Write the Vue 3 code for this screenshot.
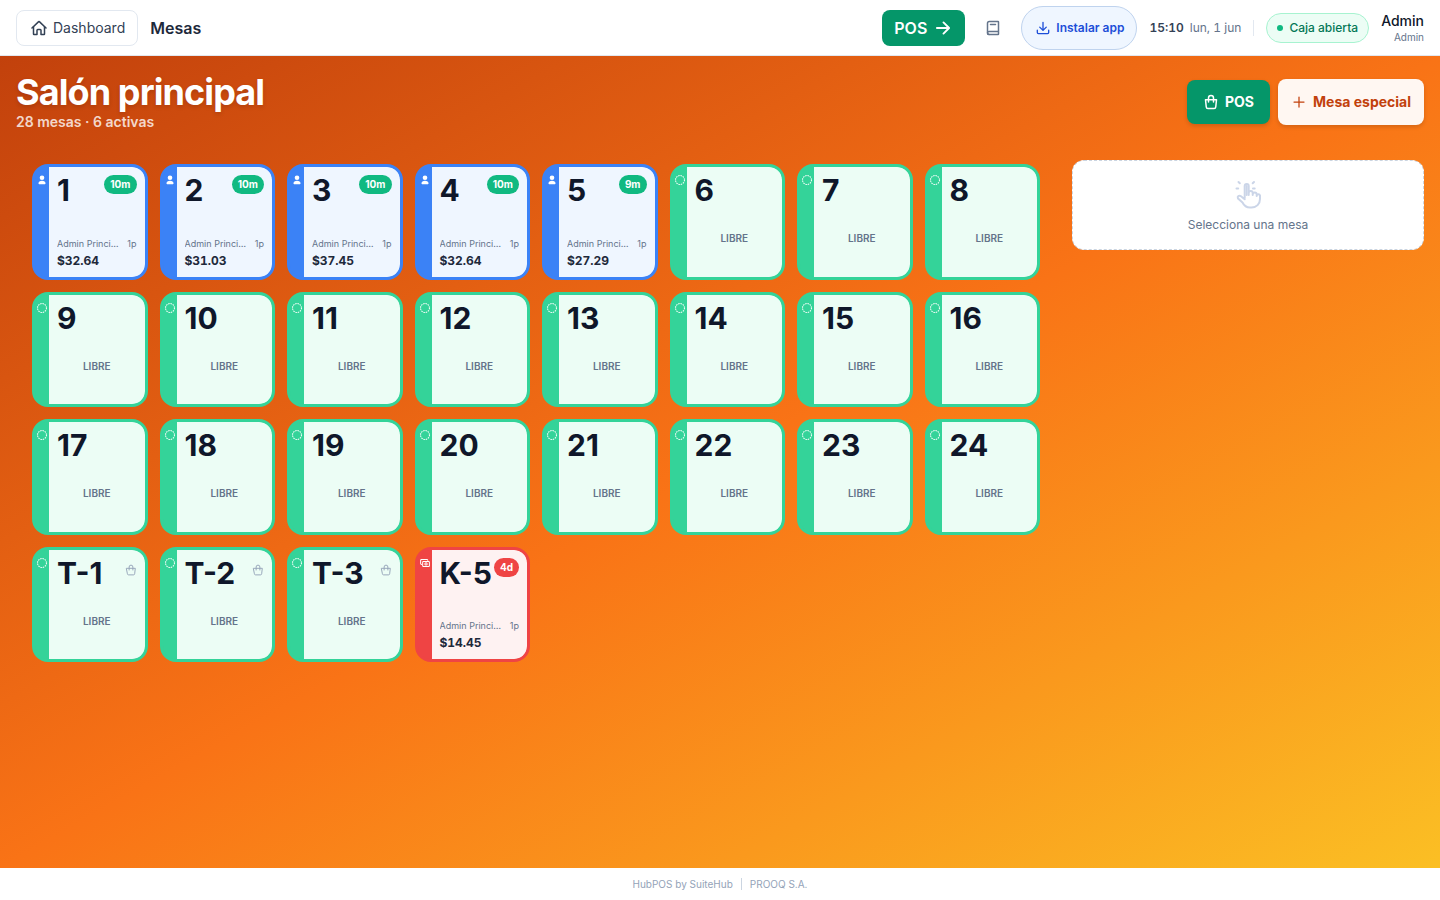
<script setup>
import {computed, ref} from "vue";

const busy = [
  {name: '1', time: '10m', total: '$32.64'},
  {name: '2', time: '10m', total: '$31.03'},
  {name: '3', time: '10m', total: '$37.45'},
  {name: '4', time: '10m', total: '$32.64'},
  {name: '5', time: '9m', total: '$27.29'},
].map((table) => ({...table, status: 'busy', waiter: 'Admin Principal', guests: 1}));

const free = Array.from({length: 19}, (_, i) => ({name: `${i + 6}`, status: 'free'}));

const takeaway = ['T-1', 'T-2', 'T-3'].map((name) => ({name, status: 'free', takeaway: true}));

const tables = ref([
  ...busy,
  ...free,
  ...takeaway,
  {name: 'K-5', status: 'late', time: '4d', total: '$14.45', waiter: 'Admin Principal', guests: 1},
]);

const activeCount = computed(() => tables.value.filter((table) => table.status !== 'free').length);
</script>

<template>
  <div class="page">
    <header class="topbar">
      <a class="topbar__home" href="#">
        <svg class="icon icon--bold" viewBox="0 0 512 512">
          <path d="M80 212v236a16 16 0 0016 16h96V328a24 24 0 0124-24h80a24 24 0 0124 24v136h96a16 16 0 0016-16V212"/>
          <path d="M480 256L266.89 52c-5-5.28-16.69-5.34-21.78 0L32 256"/>
        </svg>
        Dashboard
      </a>
      <span class="topbar__title">Mesas</span>
      <div class="topbar__right">
        <button class="topbar__pos" type="button">
          POS
          <svg class="icon icon--bold" viewBox="0 0 512 512">
            <path d="M268 112l144 144-144 144M392 256H100"/>
          </svg>
        </button>
        <button class="topbar__book" type="button" aria-label="Manual">
          <svg class="icon icon--bold" viewBox="0 0 512 512">
            <path d="M80 416V104a56 56 0 0156-56h280a16 16 0 0116 16v384a16 16 0 01-16 16H128a48 48 0 010-96h304M176 144h160"/>
            <path d="M80 416a48 48 0 0048 48"/>
          </svg>
        </button>
        <button class="topbar__install" type="button">
          <svg class="icon icon--bold" viewBox="0 0 512 512">
            <path d="M48 336v88a40 40 0 0040 40h336a40 40 0 0040-40v-88M376 224L256 344 136 224M256 344V48"/>
          </svg>
          Instalar app
        </button>
        <div class="topbar__clock">
          <strong>15:10</strong>
          <span>lun, 1 jun</span>
        </div>
        <span class="topbar__status">Caja abierta</span>
        <div class="topbar__user">
          <span class="topbar__user-name">Admin</span>
          <span class="topbar__user-role">Admin</span>
        </div>
      </div>
    </header>

    <main class="room">
      <div class="room__head">
        <div>
          <h1 class="room__title">Salón principal</h1>
          <p class="room__summary">{{ tables.length }} mesas · {{ activeCount }} activas</p>
        </div>
        <div class="room__actions">
          <button class="room__pos" type="button">
            <svg class="icon icon--bold" viewBox="0 0 512 512">
              <path d="M80 184h352l-24 232a52 52 0 01-52 48H156a52 52 0 01-52-48zM176 256V128a80 80 0 01160 0v128"/>
            </svg>
            POS
          </button>
          <button class="room__special" type="button">
            <svg class="icon" viewBox="0 0 512 512">
              <path d="M256 96v320M416 256H96"/>
            </svg>
            Mesa especial
          </button>
        </div>
      </div>

      <div class="room__content">
        <div class="tables">
          <button v-for="table in tables"
                  :key="table.name"
                  class="table-card"
                  :class="`table-card--${table.status}`"
                  type="button">
            <span class="table-card__strip">
              <svg v-if="table.status === 'busy'" class="icon icon--solid" viewBox="0 0 512 512">
                <circle cx="256" cy="140" r="118"/>
                <path d="M256 290c-110 0-180 50-180 146 0 20 14 40 34 40h292c20 0 34-20 34-40 0-96-70-146-180-146z"/>
              </svg>
              <svg v-else-if="table.status === 'late'" class="icon icon--heavy" viewBox="0 0 512 512">
                <rect x="136" y="176" width="344" height="256" rx="40"/>
                <path d="M80 330a48 48 0 01-48-48V128a48 48 0 0148-48h272a48 48 0 0148 40"/>
                <circle cx="308" cy="304" r="58"/>
              </svg>
              <svg v-else class="icon icon--dotted" viewBox="0 0 512 512">
                <circle cx="256" cy="256" r="228"/>
              </svg>
            </span>
            <span class="table-card__body">
              <span class="table-card__top">
                <span class="table-card__name">{{ table.name }}</span>
                <span v-if="table.time" class="table-card__time">{{ table.time }}</span>
                <svg v-if="table.takeaway" class="icon table-card__bag" viewBox="0 0 512 512">
                  <path d="M72 184h368l-28 232a52 52 0 01-52 48H152a52 52 0 01-52-48zM176 256V128a80 80 0 01160 0v128"/>
                </svg>
              </span>
              <span v-if="table.status === 'free'" class="table-card__free">LIBRE</span>
              <span v-else class="table-card__bottom">
                <span class="table-card__info">
                  <span class="table-card__waiter">{{ table.waiter }}</span>
                  <span>{{ table.guests }}p</span>
                </span>
                <span class="table-card__total">{{ table.total }}</span>
              </span>
            </span>
          </button>
        </div>

        <aside class="detail">
          <svg class="icon" viewBox="0 0 32 32">
            <path d="M12.700 21V9a2 2 0 014 0v9M16.700 17v-1a2 2 0 014 0v2M20.700 17.500a2 2 0 014 0V19M24.700 18.500a1.700 1.700 0 013.300 0V22c0 5-3.500 8.500-8.500 8.500H18c-4 0-6-2-7.500-5L6 21.500c-1-2.200 1-3.700 3-2.200l3.700 3"/>
            <path d="M14.700 9v9M6.500 5l1.300 1.300M4.500 11.500h1.700M22 5l-1.300 1.300M21 11.500h1.700"/>
          </svg>
          <p class="detail__text">Selecciona una mesa</p>
        </aside>
      </div>
    </main>

    <footer class="footer">
      <span>HubPOS by SuiteHub</span>
      <span class="footer__line"></span>
      <span>PROOQ S.A.</span>
    </footer>
  </div>
</template>

<style>
body {
  margin: 0;
}
</style>

<style scoped>
.page {
  min-height: 100vh;
  display: flex;
  flex-direction: column;
  font-family: Inter, 'Liberation Sans', sans-serif;
  color: #1e293b;
}

.page *,
.page {
  box-sizing: border-box;
}

button {
  font-family: inherit;
  border: none;
  padding: 0;
  cursor: pointer;
}

.icon {
  width: 16px;
  height: 16px;
  flex: none;
  fill: none;
  stroke: currentColor;
  stroke-width: 40;
  stroke-linecap: round;
  stroke-linejoin: round;
}

.icon--bold {
  stroke-width: 48;
}

.topbar {
  height: 56px;
  padding: 0 16px;
  display: flex;
  align-items: center;
  gap: 12px;
  background: #fff;
  border-bottom: 1px solid #e2e8f0;
}

.topbar__home {
  height: 36px;
  padding: 0 12px 0 14px;
  display: flex;
  align-items: center;
  gap: 6px;
  border: 1px solid #e2e8f0;
  border-radius: 8px;
  font-size: 14px;
  color: #334155;
  text-decoration: none;
}

.topbar__title {
  font-size: 16px;
  font-weight: 600;
}

.topbar__right {
  margin-left: auto;
  display: flex;
  align-items: center;
  gap: 12px;
}

.topbar__pos {
  height: 36px;
  padding: 0 12px;
  display: flex;
  align-items: center;
  gap: 6px;
  border-radius: 8px;
  background: #059669;
  color: #fff;
  font-size: 16px;
  font-weight: 600;
}

.topbar__pos .icon {
  width: 20px;
  height: 20px;
}

.topbar__book {
  width: 32px;
  height: 32px;
  display: flex;
  align-items: center;
  justify-content: center;
  background: none;
  color: #64748b;
}

.topbar__install {
  height: 44px;
  padding: 0 12px 0 14px;
  display: flex;
  align-items: center;
  gap: 6px;
  border: 1px solid #bfd3ee;
  border-radius: 22px;
  background: #eff6ff;
  color: #1d4ed8;
  font-size: 12px;
  font-weight: 600;
}

.topbar__install .icon {
  width: 14px;
  height: 14px;
}

.topbar__clock {
  padding-right: 12px;
  display: flex;
  gap: 6px;
  border-right: 1px solid #e2e8f0;
  font-size: 12px;
  line-height: 16px;
  font-variant-numeric: tabular-nums;
  color: #64748b;
}

.topbar__clock strong {
  font-weight: 600;
  color: #334155;
}

.topbar__status {
  height: 30px;
  padding: 0 10px;
  display: flex;
  align-items: center;
  gap: 6px;
  border: 1px solid #a7f3d0;
  border-radius: 15px;
  background: #ecfdf5;
  color: #047857;
  font-size: 12px;
  font-weight: 500;
}

.topbar__status::before {
  content: "";
  width: 6px;
  height: 6px;
  border-radius: 50%;
  background: #10b981;
}

.topbar__user {
  display: flex;
  flex-direction: column;
  align-items: flex-end;
}

.topbar__user-name {
  font-size: 14px;
  line-height: 18px;
  font-weight: 500;
  color: #0f172a;
}

.topbar__user-role {
  font-size: 10px;
  line-height: 14px;
  color: #64748b;
}

.room {
  flex: 1;
  padding: 16px;
  background: linear-gradient(to bottom right, #c2410c 0%, #f97316 50%, #fbbf24 100%);
}

.room__head {
  min-height: 60px;
  margin-bottom: 28px;
  display: flex;
  align-items: center;
  justify-content: space-between;
}

.room__title {
  margin: 0;
  font-size: 36px;
  line-height: 40px;
  font-weight: 700;
  letter-spacing: -0.025em;
  color: #fff;
  text-shadow: 0 2px 4px rgba(0, 0, 0, 0.15);
}

.room__summary {
  margin: 0;
  font-size: 14px;
  line-height: 20px;
  font-weight: 600;
  color: rgba(255, 255, 255, 0.8);
}

.room__actions {
  display: flex;
  align-items: center;
  gap: 8px;
}

.room__actions button {
  display: flex;
  align-items: center;
  border-radius: 8px;
  font-size: 14px;
  line-height: 20px;
  font-weight: 700;
  box-shadow: 0 2px 4px rgba(0, 0, 0, 0.15);
}

.room__pos {
  height: 44px;
  padding: 0 16px;
  gap: 6px;
  background: #059669;
  color: #fff;
}

.room__special {
  height: 46px;
  padding: 0 13px;
  gap: 6px;
  background: #fff7f2;
  color: #c2410c;
}

.room__content {
  display: grid;
  grid-template-columns: minmax(0, 1fr) 352px;
  gap: 16px;
  align-items: start;
}

.tables {
  padding: 4px 16px;
  display: grid;
  grid-template-columns: repeat(8, minmax(0, 1fr));
  gap: 12px;
}

.table-card {
  aspect-ratio: 1;
  display: flex;
  overflow: hidden;
  border: 3px solid var(--card-color);
  border-radius: 16px;
  background: var(--card-color);
  text-align: left;
}

.table-card--busy {
  --card-color: #3b82f6;
  --card-background: #eff6ff;
}

.table-card--free {
  --card-color: #34d399;
  --card-background: #ecfdf5;
}

.table-card--late {
  --card-color: #ef4444;
  --card-background: #fef2f2;
}

.table-card__strip {
  width: 14px;
  padding-top: 8px;
  display: flex;
  justify-content: center;
  color: #fff;
}

.table-card__strip .icon {
  width: 10px;
  height: 10px;
}

.icon--solid {
  fill: currentColor;
  stroke: none;
}

.icon--dotted {
  stroke-width: 52;
  stroke-dasharray: 75 44;
  stroke-linecap: butt;
}

.icon--heavy {
  stroke-width: 52;
}

.table-card__body {
  flex: 1;
  min-width: 0;
  align-self: stretch;
  padding: 8px;
  display: flex;
  flex-direction: column;
  border-radius: 0 12px 12px 0;
  background: var(--card-background);
}

.table-card__top {
  margin-bottom: 3px;
  display: flex;
  align-items: flex-start;
  justify-content: space-between;
}

.table-card__name {
  font-size: 30px;
  line-height: 30px;
  font-weight: 700;
  color: #0f172a;
}

.table-card__time {
  padding: 0 6px;
  border-radius: 10px;
  background: #10b981;
  font-size: 10px;
  line-height: 19px;
  font-weight: 700;
  color: #fff;
}

.table-card--late .table-card__time {
  background: #ef4444;
}

.table-card__bag {
  width: 12px;
  height: 12px;
  margin-top: 6px;
  color: #94a3b8;
}

.table-card__free {
  flex: 1;
  display: flex;
  align-items: center;
  justify-content: center;
  font-size: 10px;
  font-weight: 600;
  color: #64748b;
}

.table-card__bottom {
  margin-top: auto;
  display: flex;
  flex-direction: column;
  gap: 2px;
}

.table-card__info {
  display: flex;
  justify-content: space-between;
  gap: 8px;
  font-size: 9px;
  line-height: 14px;
  color: #64748b;
}

.table-card__waiter {
  overflow: hidden;
  text-overflow: ellipsis;
  white-space: nowrap;
}

.table-card__total {
  font-size: 12px;
  line-height: 16px;
  font-weight: 700;
  font-variant-numeric: tabular-nums;
  color: #1e293b;
}

.detail {
  padding: 16px;
  display: flex;
  flex-direction: column;
  align-items: center;
  gap: 8px;
  border: 1px dashed #cbd5e1;
  border-radius: 12px;
  background: #fff;
}

.detail .icon {
  width: 32px;
  height: 32px;
  stroke-width: 2;
  color: #cbd5e8;
}

.detail__text {
  margin: 0;
  font-size: 12px;
  line-height: 16px;
  color: #64748b;
}

.footer {
  height: 32px;
  display: flex;
  align-items: center;
  justify-content: center;
  gap: 8px;
  background: #fff;
  font-size: 10px;
  color: #94a3b8;
}

.footer__line {
  width: 1px;
  height: 12px;
  background: #cbd5e1;
}
</style>
